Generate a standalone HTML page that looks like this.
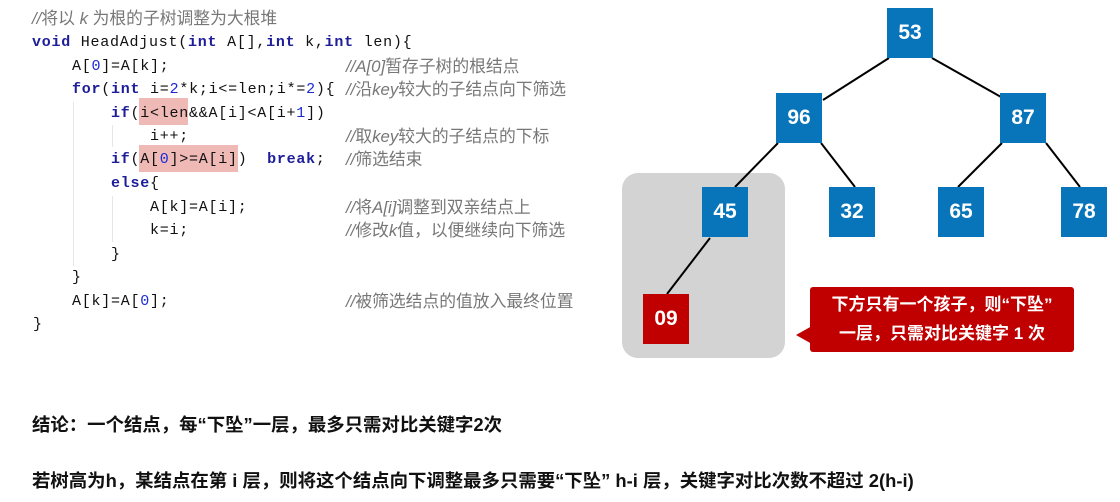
<!DOCTYPE html>
<html><head><meta charset="utf-8"><style>
body{margin:0;width:1120px;height:502px;background:#fff;position:relative;overflow:hidden;font-family:"Liberation Sans","Noto Sans CJK SC",sans-serif}
.l{position:absolute;white-space:pre;font-family:"Liberation Mono","Noto Sans CJK SC",monospace;font-size:15px;letter-spacing:0.75px;color:#111;line-height:20px}
.k{color:#1d1d9a;font-weight:bold}.n{color:#1a2bd6}
.c{position:absolute;white-space:pre;font-family:"Liberation Sans","Noto Sans CJK SC",sans-serif;font-size:16.8px;color:#777;line-height:20px}
.c i{font-style:italic}
.hl{position:absolute;background:#efb9b6}
.b{position:absolute;width:46px;height:50px;background:#0874ba;color:#fff;font-weight:bold;font-size:21px;text-align:center;line-height:50px;font-family:"Liberation Sans",sans-serif}
.t{position:absolute;font-weight:bold;font-size:18.4px;color:#111;white-space:pre}
</style></head><body>
<div class="hl" style="left:139px;top:98px;width:49px;height:27px"></div>
<div class="hl" style="left:139px;top:145px;width:99px;height:27px"></div>
<div style="position:absolute;left:73px;top:102px;width:1px;height:164px;background:#e6e6e6"></div>
<div style="position:absolute;left:112px;top:125px;width:1px;height:22px;background:#e6e6e6"></div>
<div style="position:absolute;left:112px;top:196px;width:1px;height:46px;background:#e6e6e6"></div>
<div class="c" style="left:32px;top:9px"><i>//</i>将以 <i>k</i> 为根的子树调整为大根堆</div>
<div class="l" style="left:32px;top:33px"><span class="k">void</span> HeadAdjust(<span class="k">int</span> A[],<span class="k">int</span> k,<span class="k">int</span> len){</div>
<div class="l" style="left:72px;top:57px">A[<span class="n">0</span>]=A[k];</div>
<div class="l" style="left:72px;top:80px"><span class="k">for</span>(<span class="k">int</span> i=<span class="n">2</span>*k;i&lt;=len;i*=<span class="n">2</span>){</div>
<div class="l" style="left:111px;top:104px"><span class="k">if</span>(i&lt;len&amp;&amp;A[i]&lt;A[i+<span class="n">1</span>])</div>
<div class="l" style="left:150px;top:127px">i++;</div>
<div class="l" style="left:111px;top:150px"><span class="k">if</span>(A[<span class="n">0</span>]&gt;=A[i])  <span class="k">break</span>;</div>
<div class="l" style="left:111px;top:174px"><span class="k">else</span>{</div>
<div class="l" style="left:150px;top:198px">A[k]=A[i];</div>
<div class="l" style="left:150px;top:221px">k=i;</div>
<div class="l" style="left:111px;top:245px">}</div>
<div class="l" style="left:72px;top:268px">}</div>
<div class="l" style="left:72px;top:292px">A[k]=A[<span class="n">0</span>];</div>
<div class="l" style="left:33px;top:315px">}</div>
<div class="c" style="left:346px;top:57px"><i>//A[0]</i>暂存子树的根结点</div>
<div class="c" style="left:346px;top:80px"><i>//</i>沿<i>key</i>较大的子结点向下筛选</div>
<div class="c" style="left:346px;top:127px"><i>//</i>取<i>key</i>较大的子结点的下标</div>
<div class="c" style="left:346px;top:150px"><i>//</i>筛选结束</div>
<div class="c" style="left:346px;top:198px"><i>//</i>将<i>A[i]</i>调整到双亲结点上</div>
<div class="c" style="left:346px;top:221px"><i>//</i>修改<i>k</i>值，以便继续向下筛选</div>
<div class="c" style="left:346px;top:292px"><i>//</i>被筛选结点的值放入最终位置</div>

<div style="position:absolute;left:622px;top:173px;width:163px;height:185px;background:#d3d3d3;border-radius:16px"></div>
<svg style="position:absolute;left:0;top:0" width="1120" height="502">
<g stroke="#000" stroke-width="2">
<line x1="889" y1="58" x2="823" y2="100"/>
<line x1="932" y1="58" x2="1001" y2="97"/>
<line x1="778" y1="143" x2="735" y2="187"/>
<line x1="821" y1="143" x2="855" y2="187"/>
<line x1="1002" y1="143" x2="958" y2="187"/>
<line x1="1046" y1="143" x2="1080" y2="187"/>
<line x1="710" y1="238" x2="667" y2="294"/>
</g>
<polygon points="796,335 812,326 812,344" fill="#c00000"/>
</svg>
<div class="b" style="left:887px;top:8px">53</div>
<div class="b" style="left:776px;top:93px">96</div>
<div class="b" style="left:1000px;top:93px">87</div>
<div class="b" style="left:702px;top:187px">45</div>
<div class="b" style="left:829px;top:187px">32</div>
<div class="b" style="left:938px;top:187px">65</div>
<div class="b" style="left:1061px;top:187px">78</div>
<div class="b" style="left:643px;top:294px;background:#c00000">09</div>
<div style="position:absolute;left:810px;top:287px;width:264px;height:65px;background:#c00000;border-radius:3px;color:#fff;font-weight:bold;font-size:17px;text-align:center;line-height:29px;padding-top:3px;box-sizing:border-box">下方只有一个孩子，则“下坠”<br>一层，只需对比关键字 1 次</div>
<div class="t" style="left:32px;top:411px">结论：一个结点，每“下坠”一层，最多只需对比关键字2次</div>
<div class="t" style="left:32px;top:467px">若树高为h，某结点在第 i 层，则将这个结点向下调整最多只需要“下坠” h-i 层，关键字对比次数不超过 2(h-i)</div>
</body></html>
